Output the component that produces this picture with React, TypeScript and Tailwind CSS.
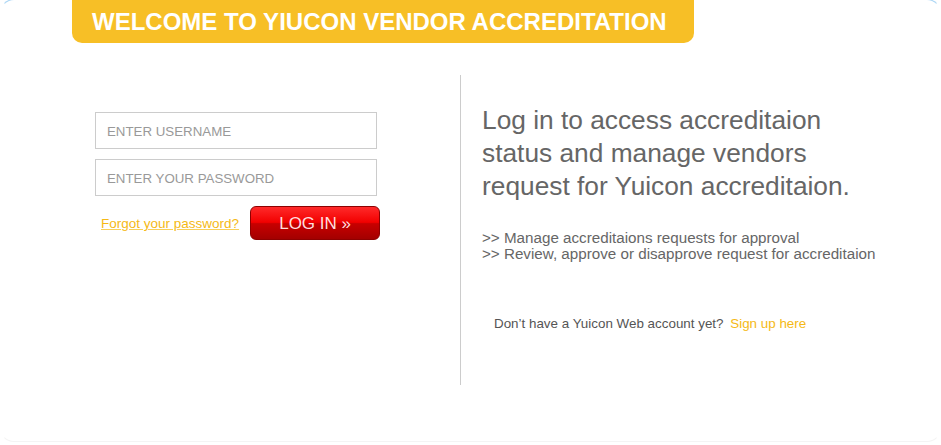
export default function App() {
  return (
    <div className="w-[941px] h-[445px] bg-white overflow-hidden font-['Liberation_Sans',Arial,sans-serif]">
      <div className="-mt-px h-[443px] rounded-[14px] border border-t-[#a9d5f5] border-x-transparent border-b-[#f4f4f4] bg-white">
        <div className="ml-[71px] flex h-[43px] w-[622px] items-center rounded-b-[10px] bg-[#f7bf26] pl-[20px]">
          <h1 className="text-[24px] font-bold leading-none text-white">WELCOME TO YIUCON VENDOR ACCREDITATION</h1>
        </div>

        <div className="mt-[32px] flex">
          <div className="w-[459px] pl-[94px] pt-[37px]">
            <div className="flex flex-col gap-[10px]">
              <input
                type="text"
                placeholder="ENTER USERNAME"
                className="h-[37px] w-[282px] border border-[#cccccc] px-[11px] pt-[2px] text-[13.3px] text-[#666] outline-none placeholder:text-[#999]"
              />
              <input
                type="password"
                placeholder="ENTER YOUR PASSWORD"
                className="h-[37px] w-[282px] border border-[#cccccc] px-[11px] pt-[2px] text-[13.3px] text-[#666] outline-none placeholder:text-[#999]"
              />
            </div>
            <div className="mt-[10px] flex items-center">
              <a href="#" className="ml-[6px] mt-[3px] text-[13.5px] text-[#f5b915] underline decoration-[#f8cf5a]">
                Forgot your password?
              </a>
              <button className="ml-[11px] h-[34px] w-[130px] rounded-[6px] border border-[#8e0000] bg-[linear-gradient(to_bottom,#ff2a2a_0%,#f20000_48%,#c80000_52%,#a30000_100%)] text-[17px] leading-none text-[#ffdede]">
                LOG IN »
              </button>
            </div>
          </div>

          <div className="h-[310px] w-px bg-[#cccccc]" />

          <div className="pl-[21px] pt-[29px] text-[#666666]">
            <p className="text-[26.3px] leading-[33px]">
              Log in to access accreditaion
              <br />
              status and manage vendors
              <br />
              request for Yuicon accreditaion.
            </p>
            <div className="mt-[27px] text-[15.2px] leading-[16px]">
              <p>&gt;&gt; Manage accreditaions requests for approval</p>
              <p>&gt;&gt; Review, approve or disapprove request for accreditaion</p>
            </div>
            <p className="mt-[54px] pl-[12px] text-[13.4px] leading-[16px] text-[#555]">
              Don’t have a Yuicon Web account yet?{' '}
              <a href="#" className="ml-[3px] text-[#f5b915]">Sign up here</a>
            </p>
          </div>
        </div>
      </div>
    </div>
  );
}
